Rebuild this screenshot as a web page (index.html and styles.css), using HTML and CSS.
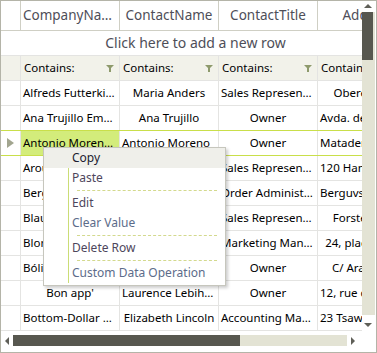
FILE: index.html
```html
<!DOCTYPE html>
<html lang="en">

<head>
    <meta charset="UTF-8">
    <title>Customers Grid</title>
    <link rel="stylesheet" href="styles.css">
</head>

<body>
    <div class="grid">
        <div class="main">
            <div class="view">
                <!-- Header -->
                <div class="row head">
                    <div class="ind"></div>
                    <div class="cell">CompanyName</div>
                    <div class="cell">ContactName</div>
                    <div class="cell">ContactTitle</div>
                    <div class="cell last">Address</div>
                </div>

                <div class="new-row">Click here to add a new row</div>

                <!-- Filter row -->
                <div class="row filter">
                    <div class="ind"></div>
                    <div class="cell"><span>Contains:</span><svg class="funnel" width="8" height="7" viewBox="0 0 8 7"><path d="M0 0H8L5 3V7H3V3Z"/></svg></div>
                    <div class="cell"><span>Contains:</span><svg class="funnel" width="8" height="7" viewBox="0 0 8 7"><path d="M0 0H8L5 3V7H3V3Z"/></svg></div>
                    <div class="cell"><span>Contains:</span><svg class="funnel" width="8" height="7" viewBox="0 0 8 7"><path d="M0 0H8L5 3V7H3V3Z"/></svg></div>
                    <div class="cell last"><span>Contains:</span></div>
                </div>

                <!-- Data rows -->
                <div class="row">
                    <div class="ind"></div>
                    <div class="cell">Alfreds Futterkiste</div>
                    <div class="cell">Maria Anders</div>
                    <div class="cell">Sales Representative</div>
                    <div class="cell last">Obere Str. 57</div>
                </div>
                <div class="row">
                    <div class="ind"></div>
                    <div class="cell">Ana Trujillo Emparedados y helados</div>
                    <div class="cell">Ana Trujillo</div>
                    <div class="cell">Owner</div>
                    <div class="cell last left">Avda. de la Constitución 2222</div>
                </div>
                <div class="row current">
                    <div class="ind"><svg width="7" height="10" viewBox="0 0 7 10"><polygon points="0,0 7,5 0,10"/></svg></div>
                    <div class="cell selected">Antonio Moreno Taquería</div>
                    <div class="cell left">Antonio Moreno</div>
                    <div class="cell">Owner</div>
                    <div class="cell last left">Mataderos 2312</div>
                </div>
                <div class="row">
                    <div class="ind"></div>
                    <div class="cell left">Around the Horn</div>
                    <div class="cell">Thomas Hardy</div>
                    <div class="cell">Sales Representative</div>
                    <div class="cell last left">120 Hanover Sq.</div>
                </div>
                <div class="row">
                    <div class="ind"></div>
                    <div class="cell left">Berglunds snabbköp</div>
                    <div class="cell">Christina Berglund</div>
                    <div class="cell">Order Administrator</div>
                    <div class="cell last left">Berguvsvägen 8</div>
                </div>
                <div class="row">
                    <div class="ind"></div>
                    <div class="cell left">Blauer See Delikatessen</div>
                    <div class="cell">Hanna Moos</div>
                    <div class="cell">Sales Representative</div>
                    <div class="cell last">Forsterstr. 57</div>
                </div>
                <div class="row">
                    <div class="ind"></div>
                    <div class="cell left">Blondel père et fils</div>
                    <div class="cell">Frédérique Citeaux</div>
                    <div class="cell">Marketing Manager</div>
                    <div class="cell last">24, place Kléber</div>
                </div>
                <div class="row">
                    <div class="ind"></div>
                    <div class="cell left">Bólido Comidas preparadas</div>
                    <div class="cell">Martín Sommer</div>
                    <div class="cell">Owner</div>
                    <div class="cell last">C/ Araquil, 67</div>
                </div>
                <div class="row">
                    <div class="ind"></div>
                    <div class="cell">Bon app'</div>
                    <div class="cell">Laurence Lebihan</div>
                    <div class="cell">Owner</div>
                    <div class="cell last left">12, rue des Bouchers</div>
                </div>
                <div class="row">
                    <div class="ind"></div>
                    <div class="cell">Bottom-Dollar Markets</div>
                    <div class="cell">Elizabeth Lincoln</div>
                    <div class="cell">Accounting Manager</div>
                    <div class="cell last left">23 Tsawassen Blvd.</div>
                </div>
                <div class="row">
                    <div class="ind"></div>
                    <div class="cell"></div>
                    <div class="cell"></div>
                    <div class="cell"></div>
                    <div class="cell last"></div>
                </div>
            </div>

            <!-- Vertical scrollbar -->
            <div class="vscroll">
                <div class="arrow up"></div>
                <div class="track"><div class="thumb"></div></div>
                <div class="arrow down"></div>
            </div>
        </div>

        <!-- Horizontal scrollbar -->
        <div class="hscroll">
            <div class="arrow left-arrow"></div>
            <div class="track"><div class="thumb"></div></div>
            <div class="arrow right-arrow"></div>
        </div>

        <!-- Context menu -->
        <div class="menu">
            <div class="item hover"><span class="gutter"></span><span class="label">Copy</span></div>
            <div class="item"><span class="gutter"></span><span class="label">Paste</span></div>
            <div class="sep"><span class="gutter"></span><span class="line"></span></div>
            <div class="item"><span class="gutter"></span><span class="label">Edit</span></div>
            <div class="item"><span class="gutter"></span><span class="label blue">Clear Value</span></div>
            <div class="sep"><span class="gutter"></span><span class="line"></span></div>
            <div class="item"><span class="gutter"></span><span class="label">Delete Row</span></div>
            <div class="sep"><span class="gutter"></span><span class="line"></span></div>
            <div class="item"><span class="gutter"></span><span class="label blue">Custom Data Operation</span></div>
        </div>
    </div>
</body>

</html>
```

FILE: styles.css
```css
* {
    box-sizing: border-box;
}

body {
    margin: 0;
    background: #fff;
    font-family: "Segoe UI", "Noto Sans", Arial, sans-serif;
}

.grid {
    position: relative;
    width: 377px;
    height: 353px;
    border: 1px solid #b4b4a8;
    display: flex;
    flex-direction: column;
    overflow: hidden;
}

.main {
    display: flex;
    height: 330px;
}

.view {
    width: 361px;
    overflow: hidden;
}

/* Rows */
.row {
    display: flex;
    height: 25px;
    border-bottom: 1px solid #e4e4e2;
    font-size: 11.5px;
    color: #000;
    white-space: nowrap;
}

.ind {
    flex: 0 0 20px;
    border-right: 1px solid #e4e4e2;
    display: flex;
    align-items: center;
    justify-content: center;
}

.ind svg {
    fill: #a2a58f;
}

.cell {
    flex: 0 0 99px;
    border-right: 1px solid #e4e4e2;
    padding: 0 2px;
    line-height: 24px;
    text-align: center;
    overflow: hidden;
    text-overflow: ellipsis;
}

.cell.left {
    text-align: left;
}

.cell.last {
    flex: 0 0 100px;
    border-right: none;
    text-overflow: clip;
}

/* Header */
.row.head {
    height: 30px;
    border-bottom: 1px solid #cfcfc4;
    font-size: 13.5px;
    color: #4e4e58;
}

.row.head .ind,
.row.head .cell {
    border-right-color: #cfcfc4;
    line-height: 29px;
}

.new-row {
    height: 25px;
    border-bottom: 1px solid #e4e4e2;
    padding-left: 28px;
    line-height: 24px;
    text-align: center;
    font-size: 14px;
    color: #4e4e58;
}

/* Filter row */
.row.filter {
    background: #f2f2ea;
}

.row.filter .cell {
    display: flex;
    align-items: center;
    justify-content: space-between;
    text-align: left;
    padding-left: 3px;
}

.funnel {
    flex: none;
    fill: #8e9a6c;
    margin-right: 3px;
}

/* Current row */
.row.current {
    border-bottom-color: #c9df4a;
    box-shadow: 0 -1px 0 #c9df4a;
}

.cell.selected {
    background: #d3ec7b;
}

/* Vertical scrollbar */
.vscroll {
    width: 14px;
    display: flex;
    flex-direction: column;
    align-items: flex-start;
}

.vscroll .track {
    flex: 1;
    width: 13px;
    margin-top: 1px;
    background: #e3e3d4;
}

.vscroll .thumb {
    width: 11px;
    height: 48px;
    background: #57574f;
}

.arrow {
    flex: none;
    width: 0;
    height: 0;
    border: 4px solid transparent;
}

.arrow.up {
    margin: 3px 0 3px 2px;
    border-bottom-color: #5f5f58;
    border-top-width: 0;
}

.arrow.down {
    margin: 8px 0 4px 2px;
    border-top-color: #5f5f58;
    border-bottom-width: 0;
}

/* Horizontal scrollbar */
.hscroll {
    flex: 1;
    display: flex;
    align-items: center;
    padding-bottom: 2px;
}

.hscroll .track {
    flex: none;
    width: 334px;
    height: 11px;
    margin-left: 4px;
    background: #e3e3d4;
}

.hscroll .thumb {
    width: 227px;
    height: 11px;
    background: #57574f;
}

.arrow.left-arrow {
    margin-left: 4px;
    border-right-color: #5f5f58;
    border-left-width: 0;
}

.arrow.right-arrow {
    margin-left: 4px;
    border-left-color: #5f5f58;
    border-right-width: 0;
}

/* Context menu */
.menu {
    position: absolute;
    left: 42px;
    top: 146px;
    width: 183px;
    padding-bottom: 2px;
    background: #fff;
    border: 1px solid #c6c6bd;
    box-shadow: 2px 2px 3px rgba(0, 0, 0, 0.2);
    font-size: 12px;
}

.menu .item {
    display: flex;
    height: 20px;
    align-items: stretch;
}

.menu .gutter {
    flex: 0 0 25px;
    border-right: 1px solid #cbdd76;
}

.menu .item.hover {
    background: #efefea;
}

.menu .item.hover .gutter {
    border-right-color: transparent;
}

.menu .label {
    padding-left: 3px;
    line-height: 20px;
    color: #4e465c;
}

.menu .item.hover .label {
    color: #1c1c30;
}

.menu .label.blue {
    color: #5c6c8a;
}

.menu .sep {
    display: flex;
    height: 5px;
}

.menu .line {
    flex: 1;
    margin: 2px 8px 0 8px;
    height: 0;
    border-top: 1px dashed #d3d98d;
}
```
